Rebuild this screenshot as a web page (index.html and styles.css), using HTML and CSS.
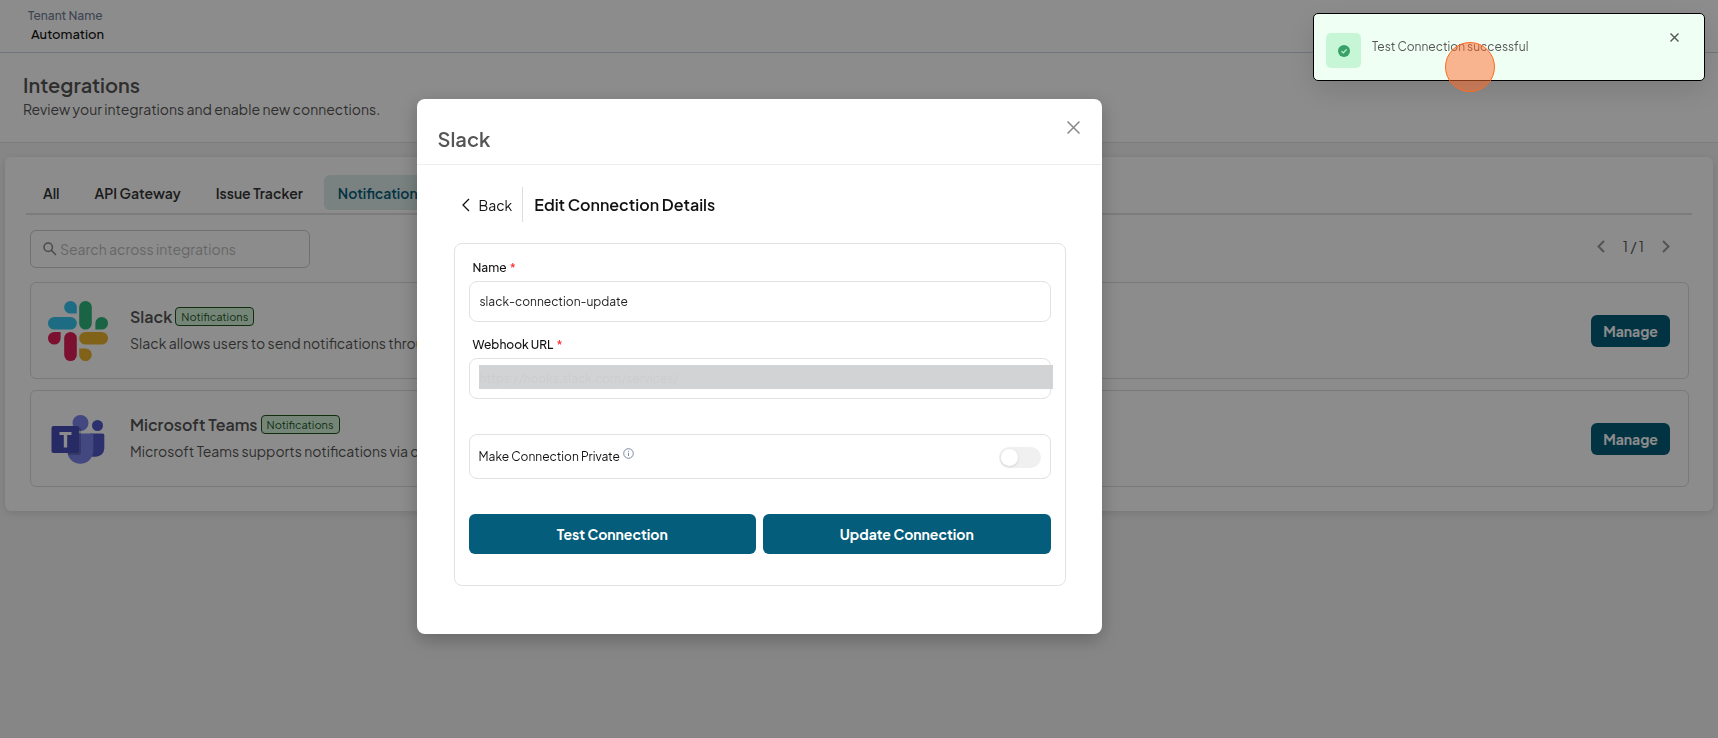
FILE: index.html
```html
<!DOCTYPE html>
<html lang="en">
<head>
    <meta charset="UTF-8">
    <meta name="viewport" content="width=device-width, initial-scale=1.0">
    <title>Integrations</title>
    <link rel="stylesheet" href="styles.css">
</head>
<body>
    <header class="topbar">
        <div class="tenant-label">Tenant Name</div>
        <div class="tenant-name">Automation</div>
    </header>

    <section class="page-head">
        <h1>Integrations</h1>
        <p>Review your integrations and enable new connections.</p>
    </section>

    <main class="panel">
        <nav class="tabs">
            <button type="button" class="tab">All</button>
            <button type="button" class="tab">API Gateway</button>
            <button type="button" class="tab">Issue Tracker</button>
            <button type="button" class="tab active">Notifications</button>
        </nav>

        <div class="toolbar">
            <label class="search">
                <svg width="14" height="14" viewBox="0 0 14 14" fill="none" stroke="#888" stroke-width="1.5">
                    <circle cx="5.2" cy="5.2" r="4.2"/>
                    <path d="M8.3 8.3L13 13"/>
                </svg>
                <input type="text" placeholder="Search across integrations" aria-label="Search across integrations">
            </label>
            <div class="pager">
                <button type="button" aria-label="Previous page">
                    <svg width="8" height="13" viewBox="0 0 8 13" fill="none" stroke="#999" stroke-width="2"><path d="M7 1L1.5 6.5L7 12"/></svg>
                </button>
                <span>1 / 1</span>
                <button type="button" aria-label="Next page">
                    <svg width="8" height="13" viewBox="0 0 8 13" fill="none" stroke="#999" stroke-width="2"><path d="M1 1L6.5 6.5L1 12"/></svg>
                </button>
            </div>
        </div>

        <article class="card">
            <svg class="logo" viewBox="0 0 60 60">
                <path fill="#36c5f0" d="M22.5 0a6.3 6.3 0 0 1 6.3 6.3v6.3h-6.3a6.3 6.3 0 0 1 0-12.6z"/>
                <rect fill="#36c5f0" x="0" y="16" width="28.8" height="12.6" rx="6.3"/>
                <rect fill="#2eb67d" x="31.2" y="0" width="12.6" height="28.6" rx="6.3"/>
                <path fill="#2eb67d" d="M60 22.3a6.3 6.3 0 0 1-6.3 6.3h-6.3v-6.3a6.3 6.3 0 0 1 12.6 0z"/>
                <path fill="#e01e5a" d="M0 37.3a6.3 6.3 0 0 1 6.3-6.3h6.3v6.3a6.3 6.3 0 0 1-12.6 0z"/>
                <rect fill="#e01e5a" x="16.2" y="31" width="12.6" height="29" rx="6.3"/>
                <rect fill="#ecb22e" x="31.2" y="31" width="28.8" height="12.6" rx="6.3"/>
                <path fill="#ecb22e" d="M37.5 60a6.3 6.3 0 0 1-6.3-6.3v-6.3h6.3a6.3 6.3 0 0 1 0 12.6z"/>
            </svg>
            <div class="info">
                <h2>Slack <span class="tag">Notifications</span></h2>
                <p>Slack allows users to send notifications through</p>
            </div>
            <button type="button" class="btn manage">Manage</button>
        </article>

        <article class="card">
            <svg class="logo" viewBox="0 0 60 60">
                <circle cx="49.5" cy="16.5" r="5.5" fill="#5059c9"/>
                <path fill="#5059c9" d="M42 24.5h12.5q1.8 0 1.800 1.8v13a8.500 8.500 0 0 1-8.500 8.500h-4z"/>
                <circle cx="32.5" cy="14" r="8" fill="#7b83eb"/>
                <path fill="#7b83eb" d="M21 24.5h22.500q1.800 0 1.800 1.800v15.500a13 13 0 0 1-26 0z"/>
                <path fill="#000" opacity=".2" d="M20 18h11q2 0 2 2v24q0 2-2 2h-11z"/>
                <rect x="3.500" y="17" width="27.500" height="27" rx="2" fill="#464eb8"/>
                <path fill="#fff" d="M11.500 23h12v3h-4.300v12.500h-3.400v-12.500h-4.300z"/>
            </svg>
            <div class="info">
                <h2>Microsoft Teams <span class="tag">Notifications</span></h2>
                <p>Microsoft Teams supports notifications via chat</p>
            </div>
            <button type="button" class="btn manage">Manage</button>
        </article>
    </main>

    <div class="overlay">
        <div class="modal" role="dialog" aria-labelledby="modalTitle">
            <div class="modal-head">
                <h2 id="modalTitle">Slack</h2>
                <button type="button" class="close" aria-label="Close">
                    <svg width="13" height="13" viewBox="0 0 13 13" stroke="#888" stroke-width="1.5"><path d="M.5 .5L12.5 12.5M12.5 .5L.5 12.5"/></svg>
                </button>
            </div>
            <div class="modal-body">
                <div class="crumb">
                    <button type="button" class="back">
                        <svg width="8" height="14" viewBox="0 0 8 14" fill="none" stroke="#111" stroke-width="1.3"><path d="M7 1L1 7L7 13"/></svg>
                        Back
                    </button>
                    <h3>Edit Connection Details</h3>
                </div>
                <form class="form">
                    <label for="name">Name <span class="req">*</span></label>
                    <input type="text" id="name" class="field" value="slack-connection-update">
                    <label for="webhook">Webhook URL <span class="req">*</span></label>
                    <div class="masked">
                        <input type="text" id="webhook" class="field" value="https://hooks.slack.com/services/">
                    </div>
                    <div class="private">
                        <label for="private">Make Connection Private</label>
                        <svg class="hint" width="11" height="11" viewBox="0 0 11 11" fill="none" stroke="#7c87a3">
                            <circle cx="5.5" cy="5.5" r="4.8"/>
                            <path d="M5.5 4.8v3.2M5.5 2.8v1"/>
                        </svg>
                        <input type="checkbox" id="private" class="switch">
                    </div>
                    <div class="actions">
                        <button type="button" class="btn">Test Connection</button>
                        <button type="button" class="btn">Update Connection</button>
                    </div>
                </form>
            </div>
        </div>
    </div>

    <div class="toast" role="status">
        <span class="toast-icon">
            <svg width="12" height="12" viewBox="0 0 12 12">
                <circle cx="6" cy="6" r="6" fill="#38a169"/>
                <path d="M3.5 6.2L5.3 8L8.6 4.3" fill="none" stroke="#c6f6d5" stroke-width="1.2"/>
            </svg>
        </span>
        <span class="toast-text">Test Connection successful</span>
        <button type="button" class="close" aria-label="Dismiss">
            <svg width="9" height="9" viewBox="0 0 9 9" stroke="#555" stroke-width="1.4"><path d="M.5 .5L8.5 8.5M8.5 .5L.5 8.5"/></svg>
        </button>
        <span class="click-mark"></span>
    </div>
</body>
</html>
```
FILE: styles.css
```css
* {
    box-sizing: border-box;
}
body {
    font-family: "Plus Jakarta Sans", Inter, sans-serif;
    font-size: 14px;
    line-height: 20px;
    background-color: #f5f5f5;
    color: #555;
    margin: 0;
}
h1, h2, h3, p {
    margin: 0;
    font-weight: 600;
}
button, input {
    font-family: inherit;
    font-size: inherit;
}
button {
    border: none;
    background: none;
    padding: 0;
    cursor: pointer;
}
svg {
    display: block;
    flex-shrink: 0;
}
.topbar {
    background-color: #fff;
    border-bottom: 1px solid #cbd5e0;
    padding: 6px 28px 8px;
    font-size: 12px;
    line-height: 19px;
}
.tenant-label {
    color: #718096;
    font-weight: 500;
}
.tenant-name {
    color: #111;
    font-weight: 500;
    font-size: 13px;
    padding-left: 3px;
}
.page-head {
    background-color: #fff;
    border-bottom: 1px solid #e2e2e2;
    padding: 19px 24px 21px 23px;
}
.page-head h1 {
    font-size: 20px;
    line-height: 26px;
}
.page-head p {
    font-weight: 400;
    line-height: 23px;
}
.panel {
    margin: 14px 5px;
    padding: 18px 21px 24px;
    background-color: #fff;
    border-radius: 6px;
    box-shadow: 0 2px 8px rgba(0, 0, 0, 0.12);
}
.tabs {
    display: flex;
    gap: 7px;
    padding: 0 3px 3px;
    border-bottom: 2px solid #e2e2e2;
}
.tab {
    height: 35px;
    padding: 0 14px;
    border-radius: 6px;
    color: #333;
    font-weight: 600;
}
.tab.active {
    background-color: #dcebeb;
    color: #045d7a;
}
.toolbar {
    display: flex;
    justify-content: space-between;
    padding: 15px 22px 14px 4px;
}
.search {
    display: flex;
    align-items: center;
    gap: 3px;
    width: 280px;
    height: 38px;
    padding: 0 12px;
    border: 1px solid #ccc;
    border-radius: 6px;
}
.search input {
    flex: 1;
    min-width: 0;
    padding: 0;
    border: none;
    outline: none;
    background: none;
}
.search input::placeholder {
    color: #bbb;
}
.pager {
    display: flex;
    gap: 18px;
    height: 32px;
    align-items: center;
    color: #555;
}
.card {
    display: flex;
    align-items: center;
    height: 97px;
    margin: 0 3px 11px 4px;
    padding: 0 18px 0 17px;
    border: 1px solid #ddd;
    border-radius: 6px;
}
.card:last-child {
    margin-bottom: 0;
}
.logo {
    width: 60px;
    height: 60px;
}
.info {
    flex: 1;
    padding-left: 22px;
}
.info h2 {
    display: flex;
    align-items: center;
    gap: 3px;
    font-size: 16px;
    line-height: 24px;
}
.info p {
    font-weight: 400;
    line-height: 28px;
}
.tag {
    padding: 0 5px;
    border: 1px solid #22541c;
    border-radius: 4px;
    background-color: #d5f5dc;
    color: #22541c;
    font-size: 11px;
    font-weight: 400;
    line-height: 17px;
}
.btn {
    border-radius: 6px;
    background-color: #045d7a;
    color: #fff;
    font-weight: 700;
}
.manage {
    width: 79px;
    height: 32px;
}
.overlay {
    position: fixed;
    inset: 0;
    display: flex;
    justify-content: center;
    align-items: flex-start;
    padding: 99px 200px 0 0;
    background-color: rgba(0, 0, 0, 0.45);
}
.modal {
    width: 685px;
    background-color: #fff;
    border-radius: 8px;
    box-shadow: 0 6px 20px rgba(0, 0, 0, 0.25);
}
.modal-head {
    display: flex;
    justify-content: space-between;
    padding: 22px 22px 8px 21px;
    border-bottom: 1px solid #eee;
}
.modal-head h2 {
    font-size: 20px;
    line-height: 35px;
}
.close {
    align-self: flex-start;
}
.modal-body {
    padding: 22px 36px 48px 37px;
}
.crumb {
    display: flex;
    align-items: center;
    height: 35px;
    margin-bottom: 21px;
    padding-left: 8px;
    color: #111;
}
.back {
    display: flex;
    align-items: center;
    gap: 9px;
    height: 35px;
    padding-right: 10px;
    border-right: 1px solid #ddd;
    color: #111;
}
.crumb h3 {
    padding-left: 11px;
    font-size: 16px;
}
.form {
    padding: 13px 14px 31px;
    border: 1px solid #e2e2e4;
    border-radius: 8px;
    color: #111;
    font-size: 12px;
}
.form > label {
    display: block;
    padding-left: 4px;
    font-weight: 500;
    line-height: 22px;
    margin-bottom: 2px;
}
.req {
    color: #f33;
    margin-left: 1px;
}
.field {
    display: block;
    width: 100%;
    height: 41px;
    margin-bottom: 12px;
    padding: 0 10px;
    border: 1px solid #e2e2e4;
    border-radius: 8px;
    color: #222;
}
/* grey strip that hides the webhook secret */
.masked {
    position: relative;
    margin-bottom: 35px;
}
.masked .field {
    margin: 0;
}
.masked::after {
    content: "";
    position: absolute;
    inset: 7px -2px 10px 10px;
    background-color: rgba(209, 210, 212, 0.97);
}
.private {
    display: flex;
    align-items: center;
    height: 45px;
    margin-bottom: 35px;
    padding: 0 9px;
    border: 1px solid #e2e2e4;
    border-radius: 8px;
}
.hint {
    margin: 0 auto 6px 3px;
}
.switch {
    appearance: none;
    width: 42px;
    height: 21px;
    margin: 2px 0 0;
    padding: 2px;
    border-radius: 11px;
    background-color: #f0f0f0;
}
.switch::before {
    content: "";
    display: block;
    width: 17px;
    height: 17px;
    border-radius: 50%;
    background-color: #fff;
    box-shadow: 0 1px 3px rgba(0, 0, 0, 0.12);
}
.actions {
    display: flex;
    gap: 7px;
}
.actions .btn {
    flex: 1;
    height: 40px;
    font-size: 14px;
}
.toast {
    position: fixed;
    top: 13px;
    right: 13px;
    display: flex;
    width: 392px;
    height: 68px;
    padding: 19px 25px 0 12px;
    border: 1px solid #000;
    border-radius: 5px;
    background-color: #f0fff4;
    box-shadow: 0 10px 30px rgba(0, 0, 0, 0.12);
    font-size: 12px;
}
.toast-icon {
    display: flex;
    align-items: center;
    justify-content: center;
    width: 35px;
    height: 35px;
    border-radius: 5px;
    background-color: #c6f6d5;
}
.toast-text {
    flex: 1;
    padding: 4px 0 0 11px;
}
/* marks where the pointer was clicked */
.click-mark {
    position: absolute;
    top: 28px;
    left: 131px;
    width: 50px;
    height: 50px;
    border: 1px solid #ff6a1f;
    border-radius: 50%;
    background-color: rgba(255, 105, 40, 0.5);
}
```
